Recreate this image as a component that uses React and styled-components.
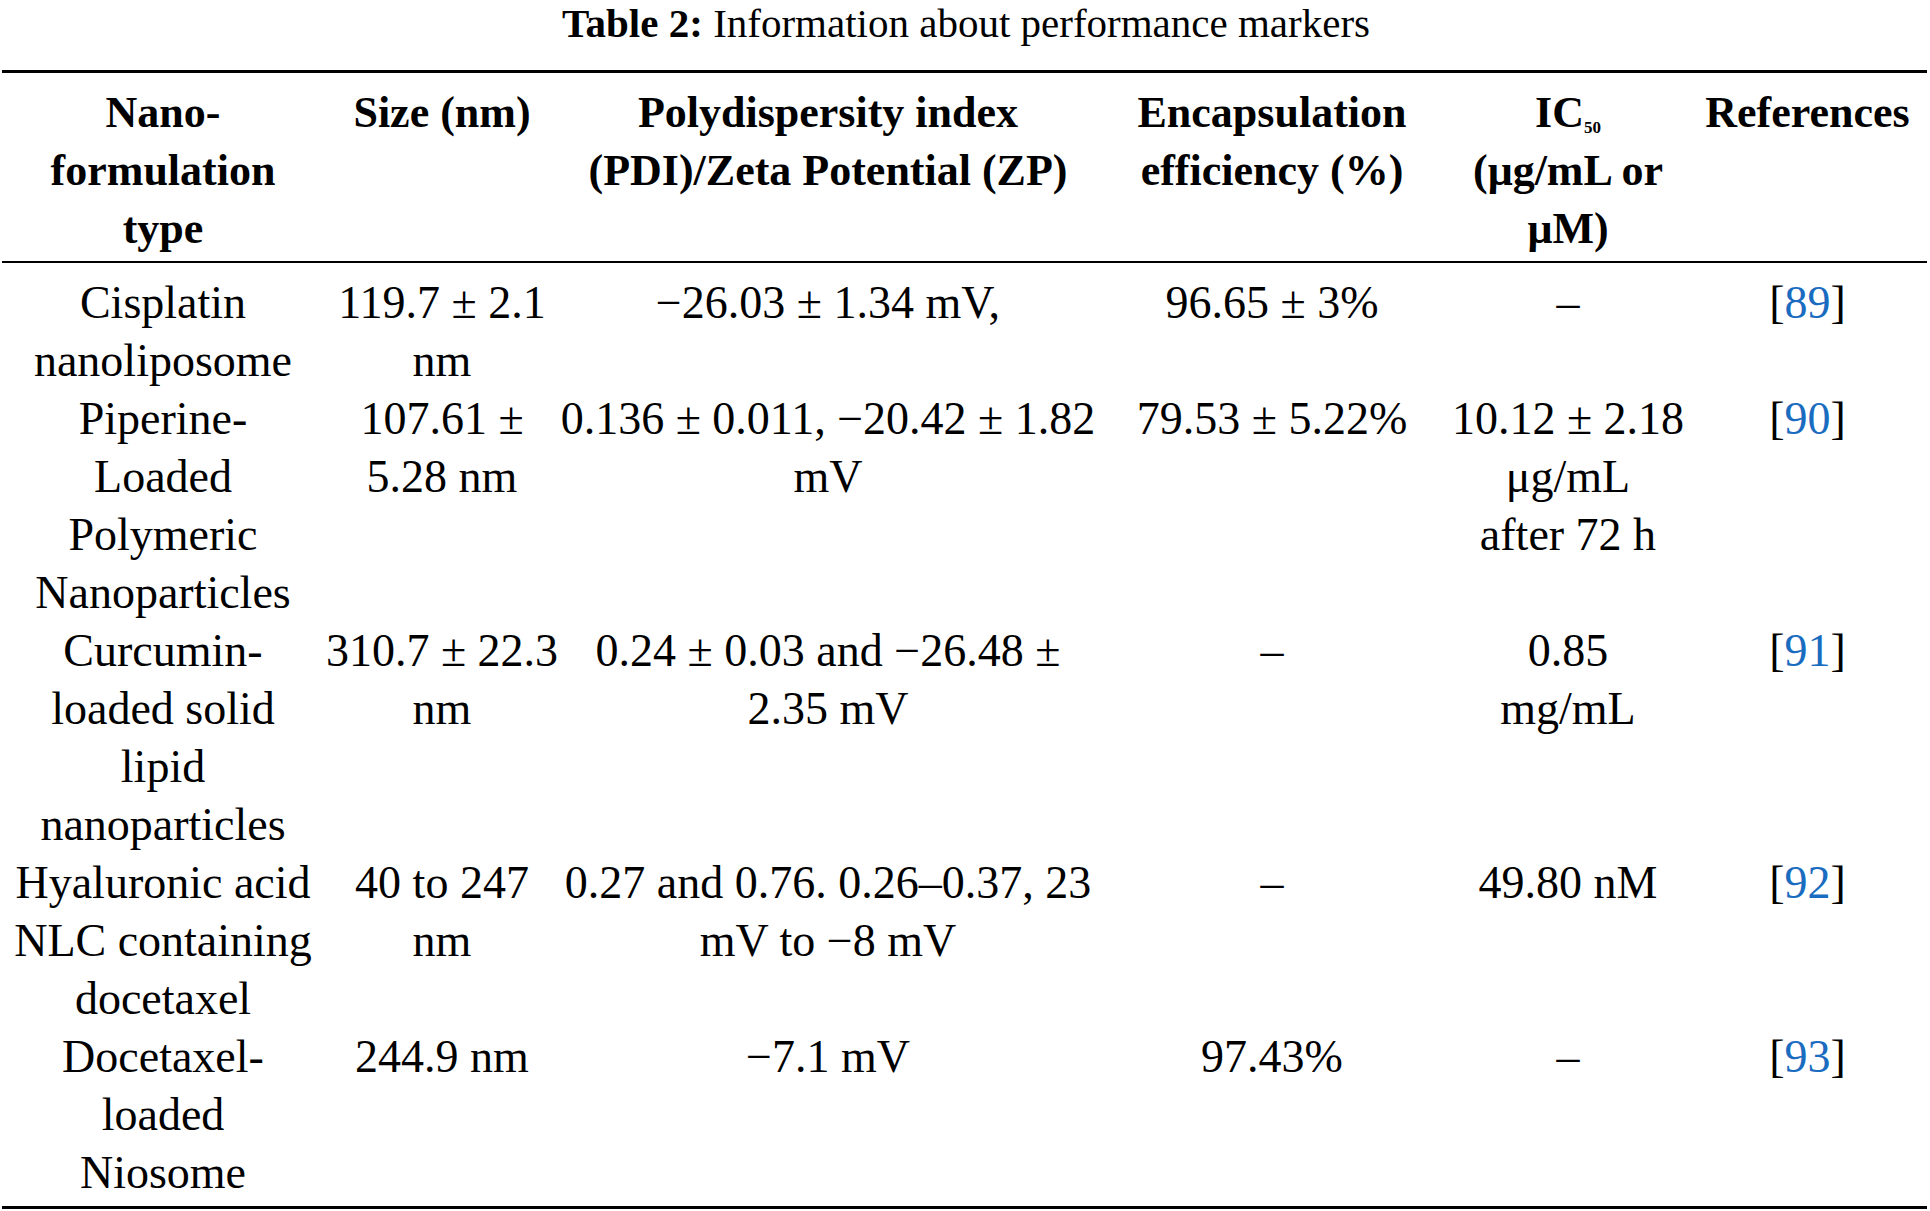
import React from 'react';
import styled, { createGlobalStyle } from 'styled-components';

const GlobalStyle = createGlobalStyle`
  html, body {
    margin: 0;
    padding: 0;
    background: #ffffff;
  }
  body {
    font-family: "Liberation Serif", "Times New Roman", serif;
    color: #000000;
  }
`;

const Page = styled.div`
  width: 1930px;
  padding: 0 0 0 2px;
  box-sizing: border-box;
`;

const Caption = styled.div`
  height: 46px;
  margin-bottom: 24px;
  font-size: 41px;
  line-height: 46px;
  text-align: center;
  white-space: nowrap;
`;

const CaptionLabel = styled.span`
  font-weight: bold;
`;

const Table = styled.table`
  width: 1925px;
  table-layout: fixed;
  border-collapse: collapse;
  border-top: 3px solid #000;
  border-bottom: 3px solid #000;

  tbody tr:first-child td {
    padding-top: 11px;
  }
  tbody tr:last-child td {
    padding-bottom: 4px;
  }
`;

const HeadRow = styled.tr`
  border-bottom: 2px solid #000;
`;

const Th = styled.th`
  padding: 11px 0 3px;
  vertical-align: top;
  text-align: center;
  font-size: 44px;
  line-height: 58px;
  font-weight: bold;
  white-space: nowrap;
`;

const Td = styled.td`
  padding: 0;
  vertical-align: top;
  text-align: center;
  font-size: 46px;
  line-height: 58px;
  white-space: nowrap;
`;

const Sub = styled.sub`
  font-size: 17px;
  line-height: 0;
  vertical-align: -6px;
`;

const RefLink = styled.span`
  color: #1a6cc0;
`;

const columns = [322, 236, 536, 352, 240, 239];

const headers = [
  ['Nano-', 'formulation', 'type'],
  ['Size (nm)'],
  ['Polydispersity index', '(PDI)/Zeta Potential (ZP)'],
  ['Encapsulation', 'efficiency (%)'],
  [
    <>
      IC<Sub>50</Sub>
    </>,
    '(μg/mL or',
    'μM)',
  ],
  ['References'],
];

const rows = [
  {
    cells: [
      ['Cisplatin', 'nanoliposome'],
      ['119.7 ± 2.1', 'nm'],
      ['−26.03 ± 1.34 mV,'],
      ['96.65 ± 3%'],
      ['–'],
    ],
    ref: '89',
  },
  {
    cells: [
      ['Piperine-', 'Loaded', 'Polymeric', 'Nanoparticles'],
      ['107.61 ±', '5.28 nm'],
      ['0.136 ± 0.011, −20.42 ± 1.82', 'mV'],
      ['79.53 ± 5.22%'],
      ['10.12 ± 2.18', 'μg/mL', 'after 72 h'],
    ],
    ref: '90',
  },
  {
    cells: [
      ['Curcumin-', 'loaded solid', 'lipid', 'nanoparticles'],
      ['310.7 ± 22.3', 'nm'],
      ['0.24 ± 0.03 and −26.48 ±', '2.35 mV'],
      ['–'],
      ['0.85', 'mg/mL'],
    ],
    ref: '91',
  },
  {
    cells: [
      ['Hyaluronic acid', 'NLC containing', 'docetaxel'],
      ['40 to 247', 'nm'],
      ['0.27 and 0.76. 0.26–0.37, 23', 'mV to −8 mV'],
      ['–'],
      ['49.80 nM'],
    ],
    ref: '92',
  },
  {
    cells: [
      ['Docetaxel-', 'loaded', 'Niosome'],
      ['244.9 nm'],
      ['−7.1 mV'],
      ['97.43%'],
      ['–'],
    ],
    ref: '93',
  },
];

const Lines = ({ lines }) =>
  lines.map((line, i) => (
    <React.Fragment key={i}>
      {i > 0 && <br />}
      {line}
    </React.Fragment>
  ));

export default function App() {
  return (
    <>
      <GlobalStyle />
      <Page>
        <Caption>
          <CaptionLabel>Table 2:</CaptionLabel> Information about performance markers
        </Caption>
        <Table>
          <colgroup>
            {columns.map((w, i) => (
              <col key={i} style={{ width: w }} />
            ))}
          </colgroup>
          <thead>
            <HeadRow>
              {headers.map((lines, i) => (
                <Th key={i}>
                  <Lines lines={lines} />
                </Th>
              ))}
            </HeadRow>
          </thead>
          <tbody>
            {rows.map((row) => (
              <tr key={row.ref}>
                {row.cells.map((lines, i) => (
                  <Td key={i}>
                    <Lines lines={lines} />
                  </Td>
                ))}
                <Td>
                  [<RefLink>{row.ref}</RefLink>]
                </Td>
              </tr>
            ))}
          </tbody>
        </Table>
      </Page>
    </>
  );
}
